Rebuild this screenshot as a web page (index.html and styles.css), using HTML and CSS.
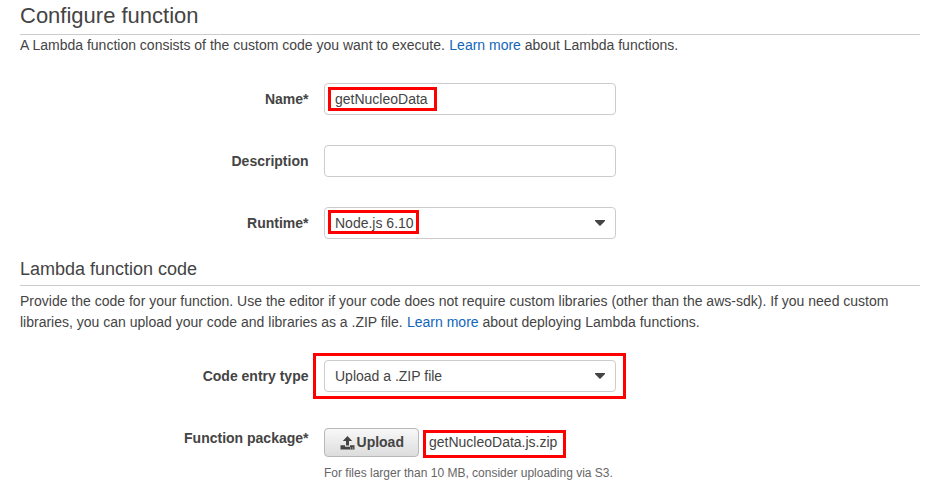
FILE: index.html
```
<!DOCTYPE html>
<html lang="en">
<head>
<meta charset="utf-8">
<title>Configure function</title>
<link rel="stylesheet" href="styles.css">
</head>
<body>
<main class="page">
  <h1 class="title">Configure function</h1>
  <p class="intro">A Lambda function consists of the custom code you want to execute. <a href="#">Learn more</a> about Lambda functions.</p>
  <div class="row">
    <div class="label">Name*</div>
    <div class="field"><span class="value">getNucleoData</span><span class="mark mark-name"></span></div>
  </div>
  <div class="row">
    <div class="label">Description</div>
    <div class="field"></div>
  </div>
  <div class="row">
    <div class="label">Runtime*</div>
    <div class="field"><span class="value">Node.js 6.10</span><svg class="caret" width="10" height="6" viewBox="0 0 10 6"><path d="M0 0H10V1L5.6 5.6Q5 6.1 4.4 5.6L0 1Z"/></svg><span class="mark mark-runtime"></span></div>
  </div>
  <h2 class="subtitle">Lambda function code</h2>
  <p class="about">Provide the code for your function. Use the editor if your code does not require custom libraries (other than the aws-sdk). If you need custom libraries, you can upload your code and libraries as a .ZIP file. <a href="#">Learn more</a> about deploying Lambda functions.</p>
  <div class="row">
    <div class="label">Code entry type</div>
    <div class="field"><span class="value">Upload a .ZIP file</span><svg class="caret" width="10" height="6" viewBox="0 0 10 6"><path d="M0 0H10V1L5.6 5.6Q5 6.1 4.4 5.6L0 1Z"/></svg><span class="mark mark-entry"></span></div>
  </div>
  <div class="row package">
    <div class="label">Function package*</div>
    <div class="upload">
      <div class="picker">
        <button class="button" type="button"><svg class="icon" width="15" height="14" viewBox="0 0 15 14"><path d="M7.5 0L12.2 5H9V9.5H6V5H2.8Z"/><path d="M0.5 9.3H5V10.7H10V9.3H14.5V13.5H0.5Z"/><path class="hole" d="M10 11.5H11V12.5H10ZM12.2 11.5H13.2V12.5H12.2Z"/></svg>Upload</button>
        <span class="file">getNucleoData.js.zip<span class="mark mark-file"></span></span>
      </div>
      <div class="hint">For files larger than 10 MB, consider uploading via S3.</div>
    </div>
  </div>
</main>
</body>
</html>
```
FILE: styles.css
```
* { box-sizing: border-box; }
body {
  margin: 0;
  background: #fff;
  color: #444;
  font: 14px/21px "Liberation Sans", Arial, sans-serif;
}
.page { padding: 0 17px 0 20px; }
h1, h2, p { margin: 0; font-weight: normal; }
a { margin-left: 0.5px; color: #1166bb; text-decoration: none; }
.title {
  height: 35px;
  font-size: 22px;
  line-height: 31px;
  border-bottom: 1px solid #ccc;
}
.intro { margin-bottom: 27px; }
.row {
  display: grid;
  grid-template-columns: 289px 292px;
  column-gap: 15px;
  align-items: center;
  margin-bottom: 30px;
}
.label { padding-right: 0.5px; text-align: right; font-weight: bold; }
.field {
  position: relative;
  display: flex;
  align-items: center;
  justify-content: space-between;
  height: 32px;
  padding: 0 10px;
  border: 1px solid #ccc;
  border-radius: 4px;
}
.caret { fill: #444; }
.mark {
  position: absolute;
  border: 3px solid #f00;
  pointer-events: none;
}
.mark-name { left: 3px; top: 3px; width: 109px; height: 24px; }
.mark-runtime { left: 3px; top: 2px; width: 91px; height: 24px; }
.mark-entry { left: -12px; top: -8px; width: 313px; height: 46px; }
.mark-file { left: -6px; top: 2px; width: 143px; height: 28px; }
.subtitle {
  height: 34px;
  margin-top: -17px;
  padding-top: 6px;
  font-size: 18px;
  line-height: 22px;
  border-bottom: 1px solid #ccc;
}
.about { padding-top: 5px; margin-bottom: 27px; }
.package { align-items: start; margin: 36px 0 0; }
.button {
  display: flex;
  align-items: center;
  justify-content: center;
  width: 95px;
  height: 29px;
  padding: 0;
  border: 1px solid #b8b8b8;
  border-radius: 4px;
  background: linear-gradient(#f8f8f8, #ddd);
  color: #444;
  font: bold 14px/21px "Liberation Sans", Arial, sans-serif;
}
.icon { margin: 0 1.5px 0 1px; fill: #444; }
.hole { fill: #ddd; }
.picker { display: flex; align-items: flex-start; }
.file { position: relative; margin-left: 10px; padding-top: 4px; }
.hint { margin-top: 6px; color: #666; font-size: 12px; }
```
